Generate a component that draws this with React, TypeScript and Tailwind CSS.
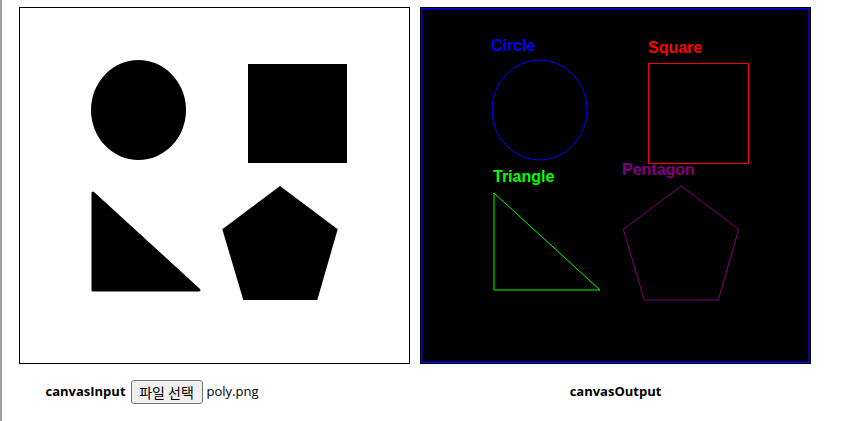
import React from 'react';

// pentagon + triangle points, in canvas coords (canvas is 390x355)
const pentagon = '260,178 317.7,221.3 297.3,292 223.3,292 202.3,221.3';
const triangle = '73,185 73,282 179,282';

function InputCanvas() {
  return (
    <svg width="391" height="357" className="block border border-black bg-white">
      <ellipse cx="118.5" cy="102" rx="47.5" ry="50" fill="#000" />
      <rect x="228" y="56" width="99" height="99" fill="#000" />
      <polygon points={triangle} fill="#000" stroke="#000" strokeWidth="3" strokeLinejoin="round" />
      <polygon points={pentagon} fill="#000" />
    </svg>
  );
}

function OutputCanvas() {
  const label = "font-['Liberation_Sans',Arial,sans-serif] font-bold";
  return (
    <svg width="391" height="357" className="block border border-black bg-black">
      <rect x="0.5" y="0.5" width="388" height="354" fill="none" stroke="#0000ff" strokeWidth="2" />
      <ellipse cx="118.5" cy="102" rx="47.5" ry="50" fill="none" stroke="#0000ff" strokeWidth="1" />
      <rect x="227.5" y="55.5" width="100" height="100" fill="none" stroke="#ff0000" strokeWidth="1" />
      <polygon points={triangle} fill="none" stroke="#00ff00" strokeWidth="1" strokeLinejoin="round" />
      <polygon points={pentagon} fill="none" stroke="#800080" strokeWidth="1" />
      <text x="70" y="43" fontSize="16" fill="#0000ff" className={label}>Circle</text>
      <text x="227" y="45" fontSize="16" fill="#ff0000" className={label}>Square</text>
      <text x="72" y="174" fontSize="16" fill="#00ff00" className={label}>Triangle</text>
      <text x="201" y="167" fontSize="16" fill="#800080" className={label}>Pentagon</text>
    </svg>
  );
}

export default function App() {
  return (
    <div className="h-[421px] w-[851px] border-l-2 border-[#a0a0a0] bg-white font-['Open_Sans','Noto_Sans_CJK_KR',sans-serif] text-[13px] text-black">
      <div className="flex gap-[10px] pl-[17px] pt-[7px]">
        <div className="flex w-[391px] flex-col items-center">
          <InputCanvas />
          <div className="mt-[16px] flex items-center">
            <span className="font-bold">canvasInput</span>
            <div className="ml-[5px] flex w-[253px] items-center">
              <button className="h-[24px] w-[72px] rounded-[3px] border border-[#767676] bg-[#efefef] text-[14px] font-['Noto_Sans_CJK_KR',sans-serif]">
                파일 선택
              </button>
              <span className="ml-[4px] text-[13px]">poly.png</span>
            </div>
          </div>
        </div>
        <div className="flex w-[391px] flex-col items-center">
          <OutputCanvas />
          <div className="mt-[16px] flex h-[24px] items-center font-bold">canvasOutput</div>
        </div>
      </div>
    </div>
  );
}
